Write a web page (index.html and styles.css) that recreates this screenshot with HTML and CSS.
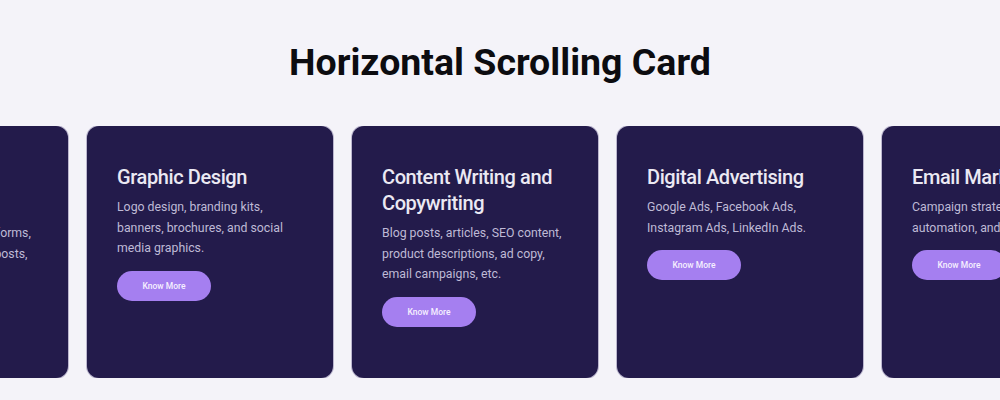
FILE: index.html
```html
<!DOCTYPE html>
<html lang="en">
<head>
<meta charset="utf-8">
<title>Horizontal Scrolling Card</title>
<link rel="stylesheet" href="styles.css">
</head>
<body>
<main class="page">
  <h1 class="heading">Horizontal Scrolling Card</h1>
  <div class="scroller">
    <div class="track">
      <article class="card">
        <h2 class="card-title">Social Media Management</h2>
        <p class="card-text">Page management on platforms, content creation, branded posts, and analytics.</p>
        <a class="btn">Know More</a>
      </article>
      <article class="card">
        <h2 class="card-title">Graphic Design</h2>
        <p class="card-text">Logo design, branding kits, banners, brochures, and social media graphics.</p>
        <a class="btn">Know More</a>
      </article>
      <article class="card">
        <h2 class="card-title">Content Writing and Copywriting</h2>
        <p class="card-text">Blog posts, articles, SEO content, product descriptions, ad copy, email campaigns, etc.</p>
        <a class="btn">Know More</a>
      </article>
      <article class="card">
        <h2 class="card-title">Digital Advertising</h2>
        <p class="card-text">Google Ads, Facebook Ads, Instagram Ads, LinkedIn Ads.</p>
        <a class="btn">Know More</a>
      </article>
      <article class="card">
        <h2 class="card-title">Email Marketing</h2>
        <p class="card-text">Campaign strategy, newsletters, automation, and analytics.</p>
        <a class="btn">Know More</a>
      </article>
    </div>
  </div>
</main>
</body>
</html>
```

FILE: styles.css
```css
* { box-sizing: border-box; }
html, body { margin: 0; padding: 0; }
body {
  background: #f4f3f9;
  font-family: Roboto, "Liberation Sans", sans-serif;
  width: 1000px;
  height: 400px;
  overflow: hidden;
}
.page {
  display: flex;
  flex-direction: column;
  align-items: stretch;
  padding-top: 40px;
}
.heading {
  margin: 0;
  text-align: center;
  font-size: 37.5px;
  font-weight: 700;
  line-height: 44px;
  color: #0c0c10;
}
.scroller {
  margin-top: 42px;
  overflow: hidden;
  width: 1000px;
}
.track {
  display: flex;
  gap: 19px;
  margin-left: -178px;
}
.card {
  flex: 0 0 246px;
  height: 252px;
  background: #231b4b;
  border-radius: 12px;
  padding: 38px 32px 30px 30px;
  box-shadow: 0 0 0 1px rgba(80, 70, 130, 0.35);
}
.card-title {
  margin: 0;
  font-size: 20px;
  font-weight: 500;
  line-height: 26px;
  letter-spacing: -0.4px;
  color: #ebe9f3;
}
.card-text {
  margin: 7px 0 0;
  font-size: 12.3px;
  line-height: 20.5px;
  color: #bfbad6;
}
.btn {
  display: inline-flex;
  align-items: center;
  justify-content: center;
  margin-top: 12px;
  width: 94px;
  height: 30px;
  border-radius: 15px;
  background: #a57ff0;
  color: #f6f0ff;
  font-size: 8.5px;
  font-weight: 500;
}
```
